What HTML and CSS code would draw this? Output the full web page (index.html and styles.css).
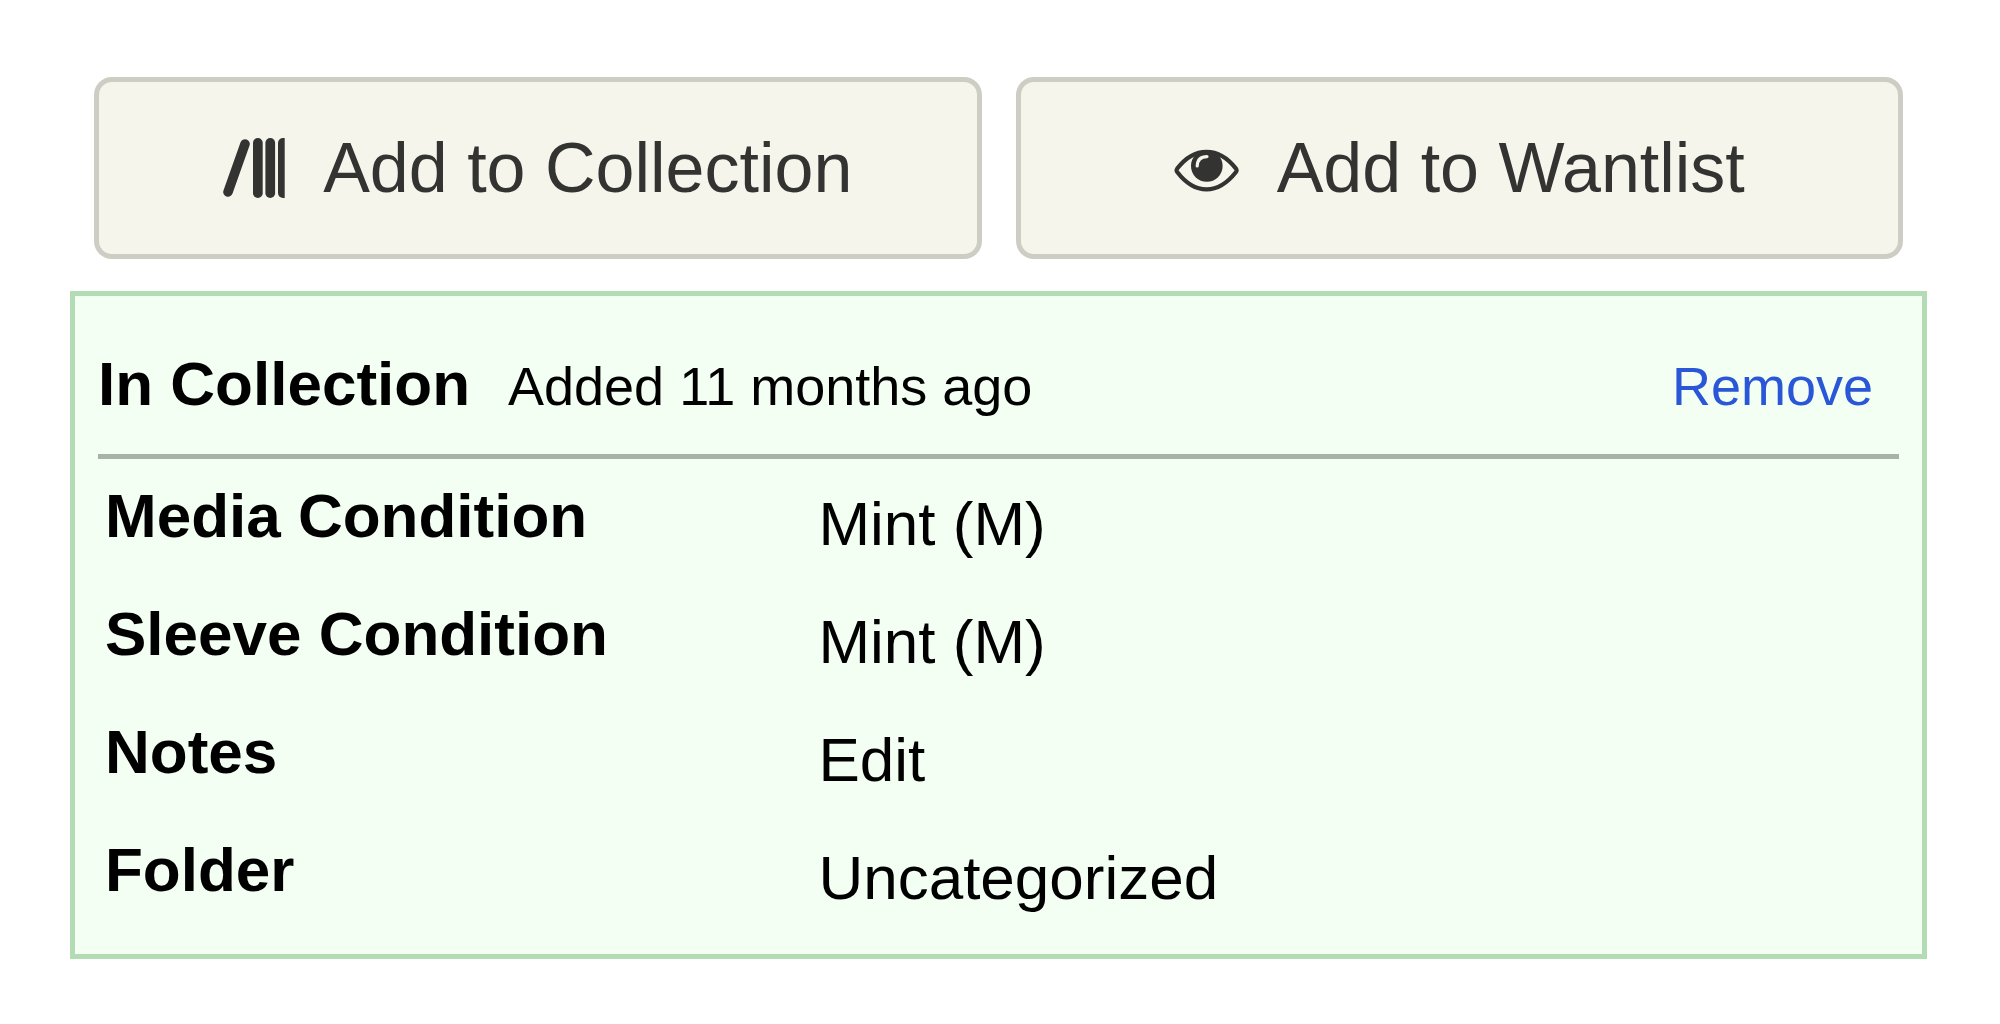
FILE: index.html
```html
<!DOCTYPE html>
<html lang="en">
	<head>
		<meta charset="utf-8">
		<title>In Collection</title>
		<link rel="stylesheet" href="styles.css">
	</head>
	<body>
		<div class="buttons">
			<button type="button" class="add">
				<svg class="icon-collection" viewBox="0 0 62 60" aria-hidden="true">
					<path d="M22 6L5 54" stroke="currentColor" stroke-width="9.6" stroke-linecap="round"/>
					<rect x="30" y="0" width="9.7" height="60" rx="4.8" fill="currentColor"/>
					<rect x="42.4" y="0" width="9.7" height="60" rx="4.8" fill="currentColor"/>
					<path d="M61.7 0V60H60A5 5 0 0 1 55 55V5A5 5 0 0 1 60 0Z" fill="currentColor"/>
				</svg>
				<span>Add to Collection</span>
			</button>
			<button type="button" class="add">
				<svg class="icon-wantlist" viewBox="0 0 65 48" aria-hidden="true">
					<path d="M3.2 24.6C12 13 22 7.8 32.5 7.8S53 13 62 24.6Q63.2 26.3 62 28C53 39.5 43 45.4 32.5 45.4S12 39.5 3.2 28Q2 26.3 3.2 24.6Z" fill="none" stroke="currentColor" stroke-width="4.2"/>
					<circle cx="32.8" cy="22" r="15.8" fill="currentColor"/>
					<path d="M23.2 22C23.4 16 27 12.6 33 12.6" fill="none" stroke="#f5f5ec" stroke-width="3.2" stroke-linecap="round"/>
				</svg>
				<span>Add to Wantlist</span>
			</button>
		</div>

		<div class="collection">
			<div class="header">
				<h2>In Collection</h2>
				<span class="added">Added 11 months ago</span>
				<a class="remove" href="#remove">Remove</a>
			</div>
			<table class="fields">
				<tr><th scope="row">Media Condition</th><td>Mint (M)</td></tr>
				<tr><th scope="row">Sleeve Condition</th><td>Mint (M)</td></tr>
				<tr><th scope="row">Notes</th><td><button type="button" class="edit">Edit</button></td></tr>
				<tr><th scope="row">Folder</th><td>Uncategorized</td></tr>
			</table>
		</div>
	</body>
</html>
```

FILE: styles.css
```css
* {
	box-sizing: border-box;
}

body {
	margin: 0;
	padding: 77px 73px 64px 70px;
	background: #fff;
	color: #000;
	font-family: "Liberation Sans", Arial, Helvetica, sans-serif;
	font-size: 62px;
	line-height: 70px;
}

.buttons {
	display: flex;
	gap: 34px;
	padding: 0 24px;
	margin-bottom: 32px;
}

.add {
	flex: 1;
	display: flex;
	align-items: center;
	justify-content: center;
	gap: 38px;
	padding: 46px 0;
	border: 5px solid #cdcdc4;
	border-radius: 18px;
	background: #f5f5ec;
	color: #333331;
	font-family: inherit;
	font-size: 70px;
	line-height: 80px;
	cursor: pointer;
}

.icon-collection {
	width: 62px;
	height: 60px;
}

.icon-wantlist {
	width: 65px;
	height: 48px;
}

.collection {
	padding: 23px;
	border: 5px solid #b4dcb4;
	background: #f3fff3;
}

.header {
	display: flex;
	align-items: baseline;
	gap: 38px;
	padding: 30px 26px 33px 0;
	border-bottom: 5px solid #a9b2a9;
}

.header h2 {
	margin: 0;
	font-size: 62px;
	font-weight: bold;
}

.added,
.remove {
	font-size: 54px;
}

.remove {
	margin-left: auto;
	color: #2a56d8;
	text-decoration: none;
}

.fields {
	width: 100%;
	table-layout: fixed;
	border-collapse: collapse;
}

.fields th {
	width: 40%;
	padding: 22px 0 26px 7px;
	font-weight: bold;
	text-align: left;
	vertical-align: top;
}

.fields td {
	padding: 30px 0 18px;
	vertical-align: top;
}

.edit {
	display: block;
	padding: 0;
	border: 0;
	background: none;
	color: inherit;
	font: inherit;
	cursor: pointer;
}
```
